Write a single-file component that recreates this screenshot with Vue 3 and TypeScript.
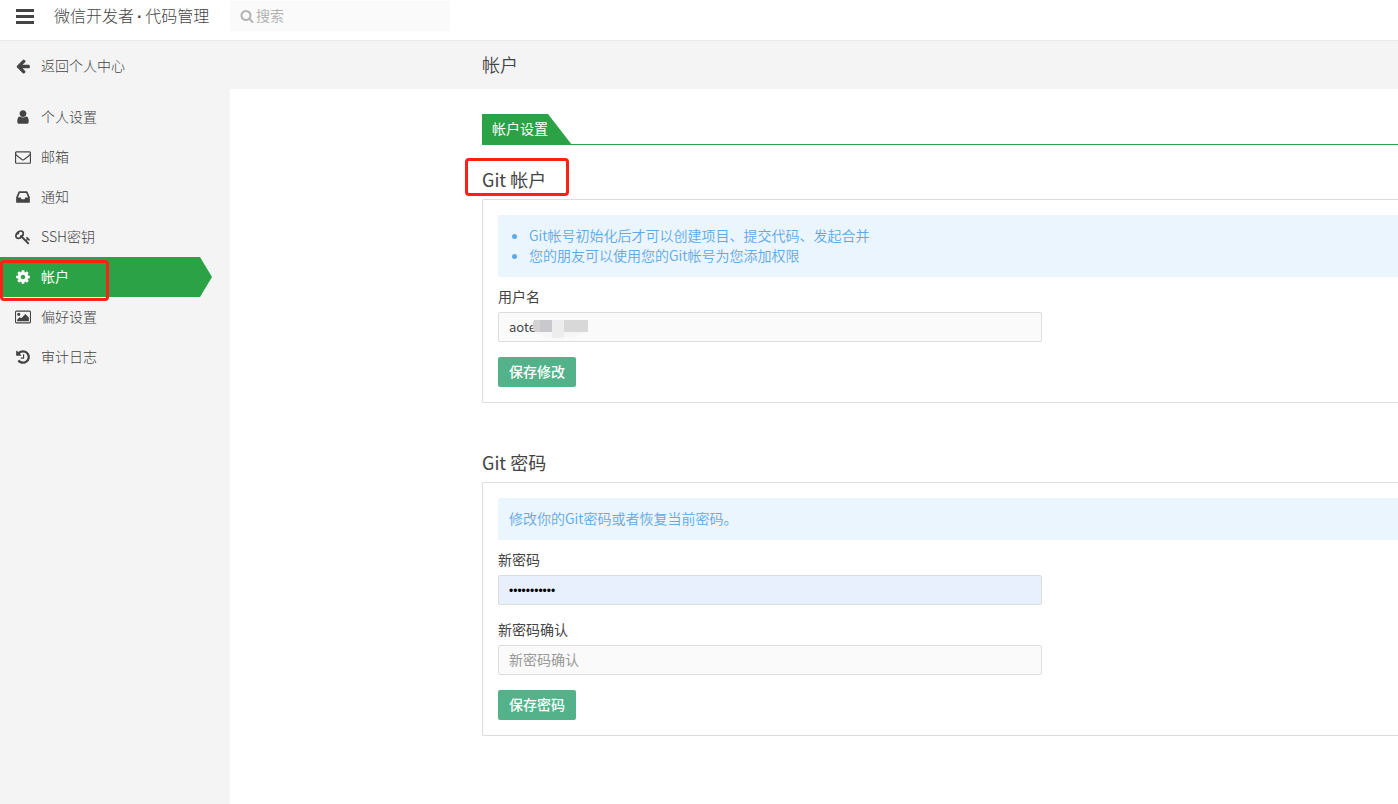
<script setup lang="ts">
import { ref } from 'vue'

interface NavItem {
  label: string
  icon: string
  viewBox?: string
  active?: boolean
}

const backIcon =
  'M1664 896v128q0 53-32.5 90.5t-84.5 37.5h-704l293 294q38 36 38 90t-38 90l-75 76q-37 37-90 37-52 0-91-37l-651-652q-37-37-37-90 0-52 37-91l651-650q38-38 91-38 52 0 90 38l75 74q38 38 38 91t-38 91l-293 293h704q52 0 84.5 37.5t32.5 90.5z'
const searchIcon =
  'M1216 832q0-185-131.5-316.5t-316.5-131.5-316.5 131.5-131.5 316.5 131.5 316.5 316.5 131.5 316.5-131.5 131.5-316.5zm512 832q0 52-38 90t-90 38q-54 0-90-38l-343-342q-179 124-399 124-143 0-273.5-55.5t-225-150-150-225-55.5-273.5 55.5-273.5 150-225 225-150 273.5-55.5 273.5 55.5 225 150 150 225 55.5 273.5q0 220-124 399l343 343q37 37 37 90z'

const navItems: NavItem[] = [
  {
    label: '个人设置',
    icon: 'M1536 1399q0 109-62.5 187t-150.5 78h-854q-88 0-150.5-78t-62.5-187q0-85 8.5-160.5t31.5-152 58.5-131 94-89 134.5-34.5q131 128 313 128t313-128q76 0 134.5 34.5t94 89 58.5 131 31.5 152 8.5 160.5zm-256-887q0 159-112.5 271.5t-271.5 112.5-271.5-112.5-112.5-271.5 112.5-271.5 271.5-112.5 271.5 112.5 112.5 271.5z',
  },
  {
    label: '邮箱',
    icon: 'M1664 1504v-768q-32 36-69 66-268 206-426 338-51 43-83 67t-86.5 48.5-102.5 24.5h-2q-48 0-102.5-24.5t-86.5-48.5-83-67q-158-132-426-338-37-30-69-66v768q0 13 9.5 22.5t22.5 9.5h1472q13 0 22.5-9.5t9.5-22.5zm0-1051v-24.5l-.5-13-3-12.5-5.5-9-9-7.5-14-2.5h-1472q-13 0-22.5 9.5t-9.5 22.5q0 168 147 284 193 152 401 317 6 5 35 29.5t46 37.5 44.5 31.5 50.5 27.5 43 9h2q20 0 43-9t50.5-27.5 44.5-31.5 46-37.5 35-29.5q208-165 401-317 54-43 100.5-115.5t46.5-131.5zm128-37v1088q0 66-47 113t-113 47h-1472q-66 0-113-47t-47-113v-1088q0-66 47-113t113-47h1472q66 0 113 47t47 113z',
  },
  {
    label: '通知',
    icon: 'M1151 960h316q-1-3-2.5-8t-2.5-8l-212-496h-708l-212 496q-1 2-2.5 8t-2.5 8h316l95 192h320zm513 30v482q0 26-19 45t-45 19h-1408q-26 0-45-19t-19-45v-482q0-62 25-123l238-552q10-25 36.5-42t52.5-17h832q26 0 52.5 17t36.5 42l238 552q25 61 25 123z',
  },
  {
    label: 'SSH密钥',
    icon: 'M832 512q0-80-56-136t-136-56-136 56-56 136q0 42 19 83-41-19-83-19-80 0-136 56t-56 136 56 136 136 56 136-56 56-136q0-42-19-83 41 19 83 19 80 0 136-56t56-136zm851 704q0 17-49 66t-66 49q-9 0-28.5-16t-36.5-33-38.5-40-24.5-26l-96 96 220 220q28 28 28 68 0 42-39 81t-81 39q-40 0-68-28l-671-671q-176 131-365 131-163 0-265.5-102.5t-102.5-265.5q0-160 95-313t248-248 313-95q163 0 265.5 102.5t102.5 265.5q0 189-131 365l355 355 96-96q-3-3-26-24.5t-40-38.5-33-36.5-16-28.5q0-17 49-66t66-49q13 0 23 10 6 6 46 44.5t82 79.5 86.5 86 73 78 28.5 41z',
  },
  {
    label: '帐户',
    active: true,
    icon: 'M1152 896q0-106-75-181t-181-75-181 75-75 181 75 181 181 75 181-75 75-181zm512-109v222q0 12-8 23t-20 13l-185 28q-19 54-39 91 35 50 107 138 10 12 10 25t-9 23q-27 37-99 108t-94 71q-12 0-26-9l-138-108q-44 23-91 38-16 136-29 186-7 28-36 28h-222q-14 0-24.5-8.5t-11.5-21.5l-28-184q-49-16-90-37l-141 107q-10 9-25 9-14 0-25-11-126-114-165-168-7-10-7-23 0-12 8-23 15-21 51-66.5t54-70.5q-27-50-41-99l-183-27q-13-2-21-12.5t-8-23.5v-222q0-12 8-23t19-13l186-28q14-46 39-92-40-57-107-138-10-12-10-24 0-10 9-23 26-36 98.5-107.5t94.5-71.5q13 0 26 10l138 107q44-23 91-38 16-136 29-186 7-28 36-28h222q14 0 24.5 8.5t11.5 21.5l28 184q49 16 90 37l142-107q9-9 24-9 13 0 25 10 129 119 165 170 7 8 7 22 0 12-8 23-15 21-51 66.5t-54 70.5q26 50 41 98l183 28q13 2 21 12.5t8 23.5z',
  },
  {
    label: '偏好设置',
    viewBox: '-64 0 1920 1792',
    icon: 'M576 576q0 80-56 136t-136 56-136-56-56-136 56-136 136-56 136 56 56 136zm1024 384v448h-1408v-192l320-320 160 160 512-512zm96-704h-1600q-13 0-22.5 9.5t-9.5 22.5v1216q0 13 9.5 22.5t22.5 9.5h1600q13 0 22.5-9.5t9.5-22.5v-1216q0-13-9.5-22.5t-22.5-9.5zm160 32v1216q0 66-47 113t-113 47h-1600q-66 0-113-47t-47-113v-1216q0-66 47-113t113-47h1600q66 0 113 47t47 113z',
  },
  {
    label: '审计日志',
    icon: 'M1664 896q0 156-61 298t-164 245-245 164-298 61q-172 0-327-72.5t-264-204.5q-7-10-6.5-22.5t8.5-20.5l137-138q10-9 25-9 16 2 23 12 73 95 179 147t225 52q104 0 198.5-40.5t163.5-109.5 109.5-163.5 40.5-198.5-40.5-198.5-109.5-163.5-163.5-109.5-198.5-40.5q-98 0-188 35.5t-160 101.5l137 138q31 30 14 69-17 40-59 40h-448q-26 0-45-19t-19-45v-448q0-42 40-59 39-17 69 14l130 129q107-101 244.5-156.5t284.5-55.5q156 0 298 61t245 164 164 245 61 298zm-640-288v448q0 14-9 23t-23 9h-320q-14 0-23-9t-9-23v-64q0-14 9-23t23-9h224v-352q0-14 9-23t23-9h64q14 0 23 9t9 23z',
  },
]

const search = ref('')
const username = ref('aote')
const password = ref('abcdefghijk')
const confirmation = ref('')
</script>

<template>
  <div class="app">
    <header class="topbar">
      <button class="menu" type="button" aria-label="菜单">
        <svg width="18" height="15" viewBox="0 0 18 15"><path d="M0 0h18v3H0zM0 6h18v3H0zM0 12h18v3H0z" /></svg>
      </button>
      <span class="brand">微信开发者<span class="dot">·</span>代码管理</span>
      <label class="search">
        <svg class="search-icon" viewBox="0 0 1792 1792"><path :d="searchIcon" /></svg>
        <input v-model="search" type="text" placeholder="搜索" aria-label="搜索" />
      </label>
    </header>

    <div class="body">
      <nav class="sidebar">
        <a class="nav-link back" href="#">
          <svg class="icon" viewBox="0 0 1792 1792"><path :d="backIcon" /></svg>
          <span class="nav-text">返回个人中心</span>
        </a>
        <a
          v-for="item in navItems"
          :key="item.label"
          class="nav-link"
          :class="{ active: item.active }"
          href="#"
        >
          <svg class="icon" :viewBox="item.viewBox ?? '0 0 1792 1792'"><path :d="item.icon" /></svg>
          <span class="nav-text">{{ item.label }}</span>
          <i v-if="item.active" class="mark mark-nav"></i>
        </a>
      </nav>

      <main class="main">
        <div class="page-head"><h1>帐户</h1></div>
        <div class="content">
          <div class="tabs"><a class="tab" href="#">帐户设置</a></div>

          <section class="section">
            <h2>Git 帐户<i class="mark mark-title"></i></h2>
            <form class="card" @submit.prevent>
              <ul class="notice">
                <li>Git帐号初始化后才可以创建项目、提交代码、发起合并</li>
                <li>您的朋友可以使用您的Git帐号为您添加权限</li>
              </ul>
              <div class="field">
                <label for="username">用户名</label>
                <div class="control">
                  <input id="username" v-model="username" class="latin" type="text" />
                  <svg class="mosaic" width="60" height="22" viewBox="0 0 60 22">
                    <path fill="#f6f6f6" d="M4 14h50l-12 5H12z" />
                    <path fill="#d2d2d0" d="M2 2h8v12H3q-4-6-1-12z" />
                    <path fill="#c9c9cd" d="M8 2h12v12H8z" />
                    <path fill="#ededee" d="M20 2h12v18H20z" />
                    <path fill="#d8d8d8" d="M32 2h24v12H32z" />
                  </svg>
                </div>
              </div>
              <button class="save" type="submit">保存修改</button>
            </form>
          </section>

          <section class="section">
            <h2>Git 密码</h2>
            <form class="card" @submit.prevent>
              <p class="notice">修改你的Git密码或者恢复当前密码。</p>
              <div class="field">
                <label for="password">新密码</label>
                <input id="password" v-model="password" class="filled" type="password" autocomplete="off" />
              </div>
              <div class="field">
                <label for="confirmation">新密码确认</label>
                <input id="confirmation" v-model="confirmation" type="password" placeholder="新密码确认" autocomplete="off" />
              </div>
              <button class="save" type="submit">保存密码</button>
            </form>
          </section>
        </div>
      </main>
    </div>
  </div>
</template>

<style>
body {
  margin: 0;
  background: #fff;
}
</style>

<style scoped>
* {
  box-sizing: border-box;
}
.app {
  display: flex;
  flex-direction: column;
  min-height: 100vh;
  overflow: hidden;
  color: #444;
  font: 14px/20px "Noto Sans CJK SC", sans-serif;
}
input,
button {
  font: inherit;
  color: inherit;
}
svg {
  display: block;
  flex: none;
  fill: currentColor;
}
a {
  color: inherit;
  text-decoration: none;
}
.topbar {
  display: flex;
  align-items: flex-start;
  height: 41px;
  border-bottom: 1px solid #e9e9e9;
}
.menu {
  padding: 9px 16px 0;
  border: 0;
  background: none;
}
.brand {
  width: 176px;
  margin-left: 4px;
  font-size: 16px;
  font-weight: 300;
  line-height: 30px;
  white-space: nowrap;
}
.dot {
  margin: 0 3px;
  font-family: "Liberation Sans", sans-serif;
  font-weight: 700;
}
.search {
  display: flex;
  align-items: center;
  width: 220px;
  height: 30px;
  margin-top: 1px;
  padding-left: 10px;
  border-radius: 2px;
  background: #fafafa;
  color: #b3b3b3;
}
.search-icon {
  width: 14px;
  height: 14px;
}
.search input {
  flex: 1;
  min-width: 0;
  padding: 0 2px 2px;
  border: 0;
  outline: 0;
  background: none;
}
.search input::placeholder {
  color: #b3b3b3;
  opacity: 1;
}
.body {
  display: flex;
  flex: 1;
}
.sidebar {
  flex: none;
  width: 230px;
  padding-top: 5px;
  background: #f4f4f4;
}
.nav-link {
  position: relative;
  display: flex;
  align-items: center;
  gap: 10px;
  width: 212px;
  height: 40px;
  padding-left: 15px;
  font-weight: 300;
}
.nav-text {
  padding-bottom: 2px;
}
.back {
  margin-bottom: 11px;
}
.icon {
  width: 16px;
  height: 16px;
}
.active {
  z-index: 0;
  color: #fff;
  font-weight: 400;
}
.active::before {
  content: "";
  position: absolute;
  inset: 0;
  z-index: -1;
  background: #2ba245;
  clip-path: polygon(0 0, 200px 0, 100% 50%, 200px 100%, 0 100%);
}
.mark {
  position: absolute;
  border: 3px solid #fd2115;
  border-radius: 4px;
  pointer-events: none;
}
.mark-nav {
  top: 3px;
  left: 0;
  width: 109px;
  height: 41px;
}
.mark-title {
  top: -8px;
  left: -17px;
  width: 104px;
  height: 38px;
}
.main {
  flex: 1;
  min-width: 0;
}
.page-head {
  height: 48px;
  padding-left: 252px;
  background: #f4f4f4;
}
h1 {
  margin: 0;
  font-size: 18px;
  font-weight: 350;
  line-height: 46px;
}
.content {
  padding: 25px 0 68px 252px;
}
.tabs {
  display: flex;
  height: 31px;
  margin-bottom: 21px;
  border-bottom: 1px solid #2ba245;
}
.tab {
  width: 90px;
  height: 31px;
  padding-left: 10px;
  background: #2ba245;
  clip-path: polygon(0 0, 66px 0, 100% 100%, 0 100%);
  color: #fff;
  line-height: 28px;
}
.section + .section {
  margin-top: 46px;
}
h2 {
  position: relative;
  margin: 0 0 7px;
  font-size: 18px;
  font-weight: 400;
  line-height: 26px;
}
.card {
  padding: 15px 0 15px 15px;
  border: 1px solid #ddd;
  border-right: 0;
  border-radius: 2px 0 0 2px;
}
.notice {
  margin: 0 0 9px;
  padding: 10px 11px 12px;
  border-radius: 2px 0 0 2px;
  background: #eaf5fe;
  color: #5fa9e8;
  font-weight: 350;
}
ul.notice {
  padding-left: 31px;
}
.field {
  width: 544px;
  max-width: 100%;
  margin-bottom: 15px;
}
.field + .field {
  margin-top: -1px;
}
.field label {
  display: block;
  margin-bottom: 6px;
}
.field input {
  display: block;
  width: 100%;
  height: 30px;
  padding: 0 10px 2px;
  border: 1px solid #ddd;
  border-radius: 2px;
  outline: 0;
  background: #fafafa;
}
.field input::placeholder {
  color: #999;
  opacity: 1;
}
.field .latin {
  font-size: 13px;
}
.field .filled {
  padding: 2px 10px 0;
  background: #e8f0fe;
  color: #000;
  font: 12px "Liberation Sans", sans-serif;
}
.control {
  position: relative;
}
.mosaic {
  position: absolute;
  top: 6px;
  left: 34px;
}
.save {
  display: block;
  height: 30px;
  padding: 0 11px 2px;
  border: 0;
  border-radius: 2px;
  background: #54b28a;
  color: #fff;
  font-weight: 500;
}
</style>
